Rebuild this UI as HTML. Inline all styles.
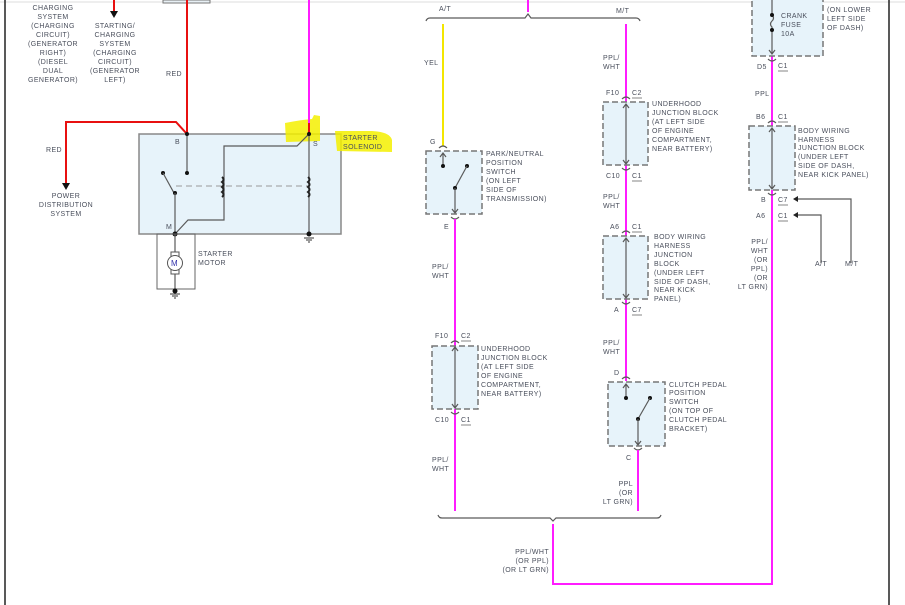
<!DOCTYPE html>
<html><head><meta charset="utf-8"><style>
html,body{margin:0;padding:0;background:#fff;}
svg{display:block}
text{font-family:"Liberation Sans",sans-serif;font-size:7px;fill:#4a4f5c;letter-spacing:0.4px}
.g{stroke:#5a5a5a;stroke-width:1.2;fill:none}
.box{fill:#e7f3fa;stroke:#777;stroke-width:1.5;stroke-dasharray:6,3}
.mag{stroke:#ff1cff;stroke-width:2;fill:none}
.red{stroke:#e81010;stroke-width:2;fill:none}
</style></head><body>
<svg width="905" height="605" viewBox="0 0 905 605" xmlns="http://www.w3.org/2000/svg">
<rect width="905" height="605" fill="#fff"/>
<line x1="0" y1="2" x2="905" y2="2" stroke="#ddd" stroke-width="1"/>
<line x1="5" y1="0" x2="5" y2="605" stroke="#222" stroke-width="1.5"/>
<line x1="889" y1="0" x2="889" y2="605" stroke="#222" stroke-width="1.5"/>

<g text-anchor="middle">
<text x="53" y="10">CHARGING</text><text x="53" y="19">SYSTEM</text><text x="53" y="28">(CHARGING</text><text x="53" y="37">CIRCUIT)</text><text x="53" y="46">(GENERATOR</text><text x="53" y="55">RIGHT)</text><text x="53" y="64">(DIESEL</text><text x="53" y="73">DUAL</text><text x="53" y="82">GENERATOR)</text>
<text x="115" y="28">STARTING/</text><text x="115" y="37">CHARGING</text><text x="115" y="46">SYSTEM</text><text x="115" y="55">(CHARGING</text><text x="115" y="64">CIRCUIT)</text><text x="115" y="73">(GENERATOR</text><text x="115" y="82">LEFT)</text>
<text x="66" y="198">POWER</text><text x="66" y="207">DISTRIBUTION</text><text x="66" y="216">SYSTEM</text>
</g>
<line x1="114" y1="0" x2="114" y2="11" class="red"/>
<polygon points="110,11 118,11 114,18" fill="#111"/>
<rect x="163" y="0" width="47" height="3" fill="#e8f0f5" stroke="#777"/>
<text x="166" y="76">RED</text>
<text x="46" y="152">RED</text>
<path d="M187,0 V134 L176,122 H66 V183" class="red"/>
<polygon points="62,183 70,183 66,190" fill="#111"/>

<rect x="139" y="134" width="202" height="100" fill="#e7f3fa" stroke="#888" stroke-width="1.5"/>

<!-- highlights -->
<g opacity="0.85">
<path d="M285,123 Q300,120 312,119 L314,115 L320,116 L320,141 L286,142 Z" fill="#f4f000"/>
<path d="M335,131 L372,131 Q390,132 392,140 L392,152 L337,151 Z" fill="#f4f000"/>
</g>

<line x1="309" y1="0" x2="309" y2="123" class="mag"/>
<line x1="309" y1="123" x2="309" y2="134" class="red"/>
<path d="M187,134 V173" class="g"/>
<circle cx="187" cy="134" r="2" fill="#111"/><circle cx="187" cy="173" r="2" fill="#111"/>
<circle cx="163" cy="173" r="2" fill="#111"/>
<path d="M163,173 L174,193" class="g"/>
<circle cx="175" cy="193" r="2" fill="#111"/>
<path d="M175,193 V234" class="g"/>
<path d="M175,234 L188,220 H224 V146 H297 L309,134 V234" class="g"/>
<line x1="176" y1="186" x2="308" y2="186" stroke="#999" stroke-width="1" stroke-dasharray="6,4"/>
<path d="M222,177 q3,2.5 0,5 q3,2.5 0,5 q3,2.5 0,5 q3,2.5 0,5" stroke="#222" stroke-width="2" fill="none"/>
<path d="M308,177 q3,2.5 0,5 q3,2.5 0,5 q3,2.5 0,5 q3,2.5 0,5" stroke="#222" stroke-width="2" fill="none"/>
<circle cx="309" cy="134" r="2" fill="#111"/>
<circle cx="175" cy="234" r="2.5" fill="#111"/><circle cx="309" cy="234" r="2.5" fill="#111"/>
<path d="M304,238 h10 M306,240 h6 M308,242 h2" stroke="#333" stroke-width="1"/>
<text x="175" y="144">B</text><text x="313" y="146">S</text><text x="166" y="229">M</text>
<text x="343" y="140">STARTER</text><text x="343" y="149">SOLENOID</text>
<rect x="157" y="234" width="38" height="55" fill="none" stroke="#666" stroke-width="1"/>
<line x1="175" y1="234" x2="175" y2="292" class="g"/>
<rect x="171" y="252" width="8" height="22" fill="#fff" stroke="#555"/>
<circle cx="175" cy="263" r="7.5" fill="#fff" stroke="#555"/>
<text x="171" y="266" style="font-size:8px;fill:#33a">M</text>
<circle cx="175" cy="291" r="2.5" fill="#111"/>
<path d="M170,294 h10 M172,296 h6 M174,298 h2" stroke="#333" stroke-width="1"/>
<text x="198" y="256">STARTER</text><text x="198" y="265">MOTOR</text>

<text x="439" y="11">A/T</text><text x="616" y="13">M/T</text>
<line x1="528" y1="0" x2="528" y2="12" class="mag"/>
<path d="M426,21 Q427,18 430,18 H525 L528,14 L531,18 H636 Q639,18 640,21" class="g" stroke="#777"/>
<line x1="443" y1="24" x2="443" y2="146" stroke="#f3e600" stroke-width="2"/>
<text x="424" y="65">YEL</text>
<line x1="626" y1="24" x2="626" y2="381" class="mag"/>
<text x="603" y="60">PPL/</text><text x="603" y="69">WHT</text>

<text x="430" y="144">G</text>
<rect x="426" y="151" width="56" height="63" class="box"/>
<path d="M439,148 q4,-4 8,0" class="g"/>
<path d="M443,153 V166 M440,157 L443,153 L446,157" class="g"/>
<circle cx="443" cy="166" r="2" fill="#111"/><circle cx="467" cy="166" r="2" fill="#111"/>
<path d="M455,188 L467,166" class="g"/><circle cx="455" cy="188" r="2" fill="#111"/>
<path d="M455,188 V213 M452,209 L455,213 L458,209" class="g"/>
<path d="M451,217 q4,4 8,0" class="g"/>
<text x="486" y="156">PARK/NEUTRAL</text><text x="486" y="165">POSITION</text><text x="486" y="174">SWITCH</text><text x="486" y="183">(ON LEFT</text><text x="486" y="192">SIDE OF</text><text x="486" y="201">TRANSMISSION)</text>
<text x="444" y="229">E</text>
<line x1="455" y1="219" x2="455" y2="511" class="mag"/>
<text x="432" y="269">PPL/</text><text x="432" y="278">WHT</text>

<text x="435" y="338">F10</text><text x="461" y="338">C2</text><line x1="461" y1="341" x2="471" y2="341" stroke="#666" stroke-width="0.8"/>
<rect x="432" y="346" width="46" height="63" class="box"/>
<path d="M451,343 q4,-4 8,0 M451,412 q4,4 8,0" class="g"/>
<path d="M455,347 V408 M452,351 L455,347 L458,351 M452,404 L455,408 L458,404" class="g"/>
<text x="481" y="351">UNDERHOOD</text><text x="481" y="360">JUNCTION BLOCK</text><text x="481" y="369">(AT LEFT SIDE</text><text x="481" y="378">OF ENGINE</text><text x="481" y="387">COMPARTMENT,</text><text x="481" y="396">NEAR BATTERY)</text>
<text x="435" y="422">C10</text><text x="461" y="422">C1</text><line x1="461" y1="425" x2="471" y2="425" stroke="#666" stroke-width="0.8"/>
<text x="432" y="462">PPL/</text><text x="432" y="471">WHT</text>

<text x="606" y="95">F10</text><text x="632" y="95">C2</text><line x1="632" y1="98" x2="642" y2="98" stroke="#666" stroke-width="0.8"/>
<rect x="603" y="102" width="45" height="63" class="box"/>
<path d="M622,99 q4,-4 8,0 M622,168 q4,4 8,0" class="g"/>
<path d="M626,104 V164 M623,108 L626,104 L629,108 M623,160 L626,164 L629,160" class="g"/>
<text x="652" y="106">UNDERHOOD</text><text x="652" y="115">JUNCTION BLOCK</text><text x="652" y="124">(AT LEFT SIDE</text><text x="652" y="133">OF ENGINE</text><text x="652" y="142">COMPARTMENT,</text><text x="652" y="151">NEAR BATTERY)</text>
<text x="606" y="178">C10</text><text x="632" y="178">C1</text><line x1="632" y1="181" x2="642" y2="181" stroke="#666" stroke-width="0.8"/>
<text x="603" y="199">PPL/</text><text x="603" y="208">WHT</text>

<text x="610" y="229">A6</text><text x="632" y="229">C1</text><line x1="632" y1="232" x2="642" y2="232" stroke="#666" stroke-width="0.8"/>
<rect x="603" y="236" width="45" height="63" class="box"/>
<path d="M622,233 q4,-4 8,0 M622,302 q4,4 8,0" class="g"/>
<path d="M626,238 V298 M623,242 L626,238 L629,242 M623,294 L626,298 L629,294" class="g"/>
<text x="654" y="239">BODY WIRING</text><text x="654" y="248">HARNESS</text><text x="654" y="257">JUNCTION</text><text x="654" y="266">BLOCK</text><text x="654" y="275">(UNDER LEFT</text><text x="654" y="284">SIDE OF DASH,</text><text x="654" y="292">NEAR KICK</text><text x="654" y="301">PANEL)</text>
<text x="614" y="312">A</text><text x="632" y="312">C7</text><line x1="632" y1="315" x2="642" y2="315" stroke="#666" stroke-width="0.8"/>
<text x="603" y="345">PPL/</text><text x="603" y="354">WHT</text>

<text x="614" y="375">D</text>
<rect x="608" y="382" width="57" height="64" class="box"/>
<path d="M622,379 q4,-4 8,0" class="g"/>
<path d="M626,384 V398 M623,388 L626,384 L629,388" class="g"/>
<circle cx="626" cy="398" r="2" fill="#111"/><circle cx="650" cy="398" r="2" fill="#111"/>
<path d="M638,419 L650,398" class="g"/><circle cx="638" cy="419" r="2" fill="#111"/>
<path d="M638,419 V445 M635,441 L638,445 L641,441" class="g"/>
<path d="M634,448 q4,4 8,0" class="g"/>
<text x="669" y="387">CLUTCH PEDAL</text><text x="669" y="395">POSITION</text><text x="669" y="404">SWITCH</text><text x="669" y="413">(ON TOP OF</text><text x="669" y="422">CLUTCH PEDAL</text><text x="669" y="431">BRACKET)</text>
<text x="626" y="460">C</text>
<line x1="638" y1="450" x2="638" y2="511" class="mag"/>
<g text-anchor="end"><text x="633" y="486">PPL</text><text x="633" y="495">(OR</text><text x="633" y="504">LT GRN)</text></g>

<path d="M438,515 Q439,518 442,518 H550 L553,521 L556,518 H657 Q660,518 661,515" class="g" stroke="#777"/>
<path d="M553,524 V584 H772 V0" class="mag"/>
<g text-anchor="end"><text x="549" y="554">PPL/WHT</text><text x="549" y="563">(OR PPL)</text><text x="549" y="572">(OR LT GRN)</text></g>

<rect x="752" y="-5" width="71" height="61" class="box"/>
<path d="M772,0 V15 q3,3 0,6 q-3,3 0,6 V54 M769,50 L772,54 L775,50" class="g"/>
<circle cx="772" cy="15" r="2" fill="#111"/><circle cx="772" cy="30" r="2" fill="#111"/>
<path d="M768,59 q4,4 8,0" class="g"/>
<text x="781" y="18">CRANK</text><text x="781" y="27">FUSE</text><text x="781" y="36">10A</text>
<text x="827" y="12">(ON LOWER</text><text x="827" y="21">LEFT SIDE</text><text x="827" y="30">OF DASH)</text>
<text x="757" y="69">D5</text><text x="778" y="68">C1</text><line x1="778" y1="71" x2="788" y2="71" stroke="#666" stroke-width="0.8"/>
<text x="755" y="96">PPL</text>
<text x="756" y="119">B6</text><text x="778" y="119">C1</text><line x1="778" y1="122" x2="788" y2="122" stroke="#666" stroke-width="0.8"/>
<rect x="749" y="126" width="46" height="64" class="box"/>
<path d="M768,123 q4,-4 8,0 M768,193 q4,4 8,0" class="g"/>
<path d="M772,128 V189 M769,132 L772,128 L775,132 M769,185 L772,189 L775,185" class="g"/>
<text x="798" y="133">BODY WIRING</text><text x="798" y="142">HARNESS</text><text x="798" y="150">JUNCTION BLOCK</text><text x="798" y="159">(UNDER LEFT</text><text x="798" y="168">SIDE OF DASH,</text><text x="798" y="177">NEAR KICK PANEL)</text>
<text x="761" y="202">B</text><text x="778" y="202">C7</text><line x1="778" y1="205" x2="788" y2="205" stroke="#666" stroke-width="0.8"/>
<text x="756" y="218">A6</text><text x="778" y="218">C1</text><line x1="778" y1="221" x2="788" y2="221" stroke="#666" stroke-width="0.8"/>
<path d="M851,263 V199 H796 M821,263 V215 H796" class="g"/>
<polygon points="793,199 798,196 798,202" fill="#222"/><polygon points="793,215 798,212 798,218" fill="#222"/>
<text x="815" y="266">A/T</text><text x="845" y="266">M/T</text>
<g text-anchor="end"><text x="768" y="244">PPL/</text><text x="768" y="253">WHT</text><text x="768" y="262">(OR</text><text x="768" y="271">PPL)</text><text x="768" y="280">(OR</text><text x="768" y="289">LT GRN)</text></g>
</svg>
</body></html>
